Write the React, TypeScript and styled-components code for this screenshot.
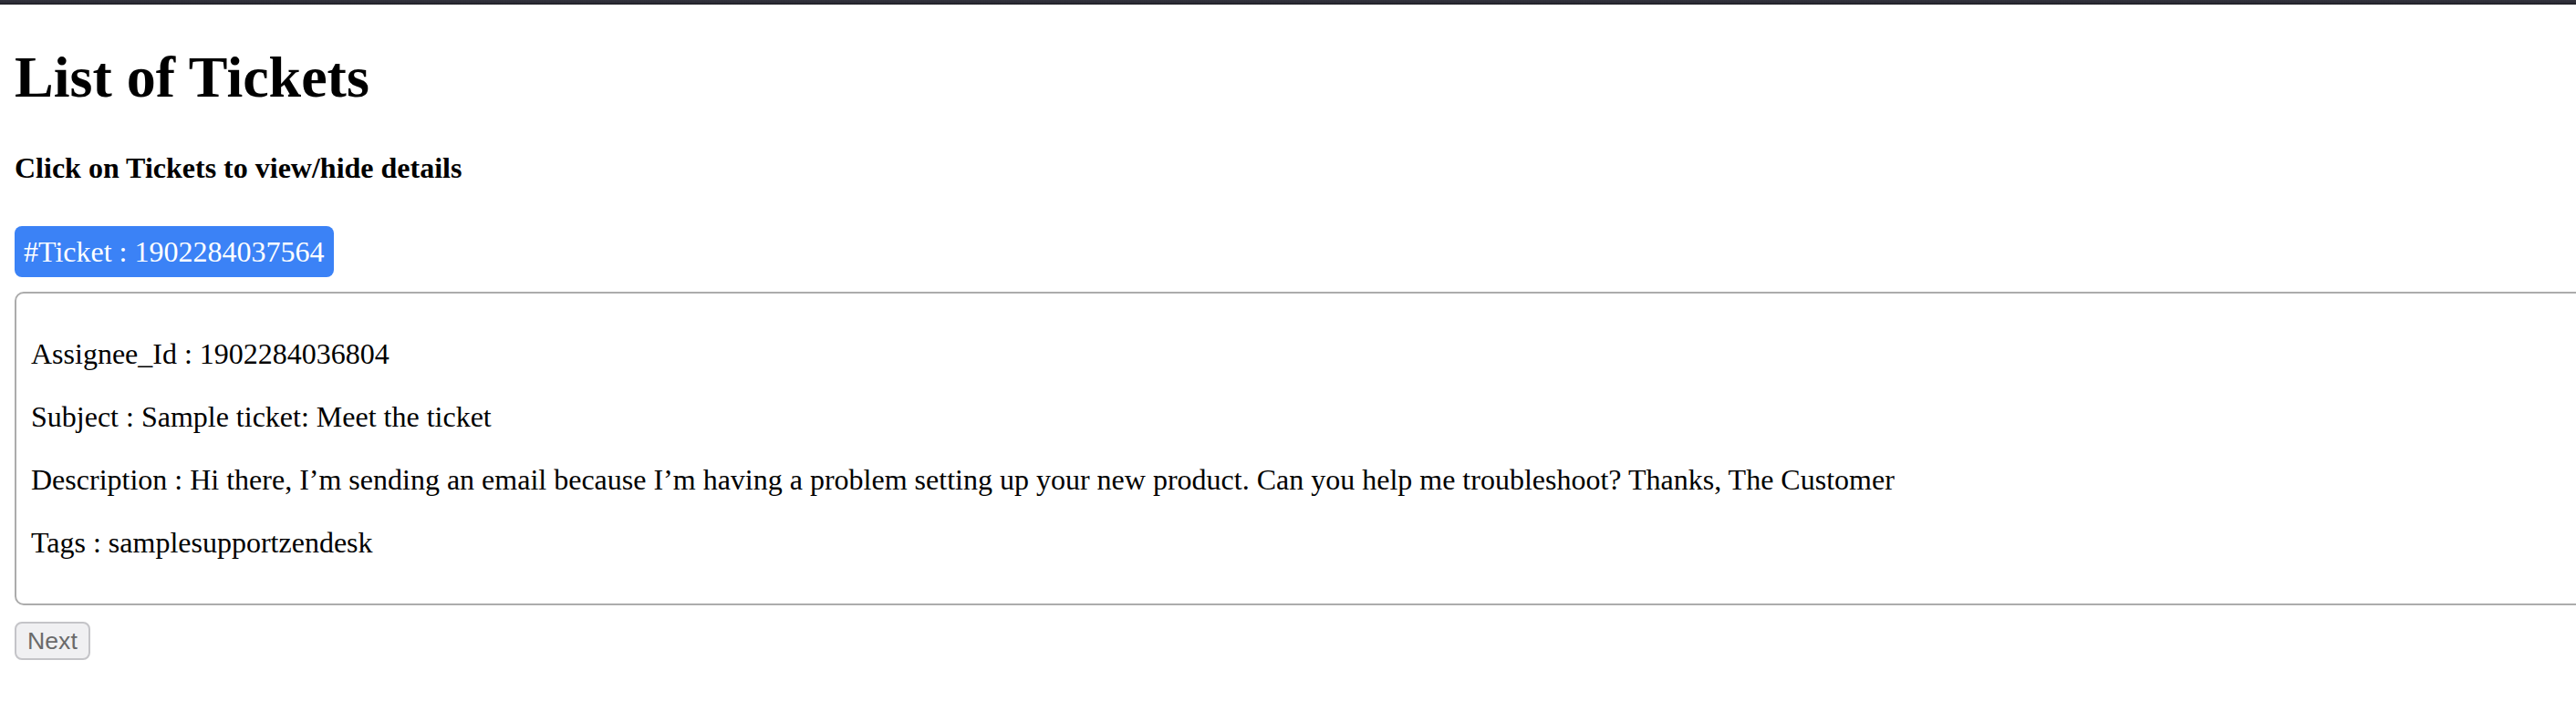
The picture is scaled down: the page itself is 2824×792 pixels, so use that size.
import React from "react";
import styled, { createGlobalStyle } from "styled-components";

const GlobalStyle = createGlobalStyle`
  html, body {
    margin: 0;
    padding: 0;
    background: #ffffff;
    overflow: hidden;
  }
  body {
    font-family: "Liberation Serif", "Times New Roman", serif;
    color: #000000;
  }
`;

const TopBar = styled.div`
  height: 5px;
  background: linear-gradient(#34343e, #2a2a33 70%, #111116);
`;

const Page = styled.main`
  padding: 0 16px;
  width: 2900px;
`;

const Title = styled.h1`
  font-size: 64px;
  font-weight: 700;
  line-height: normal;
  margin: 42.9px 0 44.6px;
`;

const Hint = styled.h4`
  font-size: 32px;
  font-weight: 700;
  line-height: normal;
  margin: 0 0 42.6px;
`;

const TicketToggle = styled.button`
  display: inline-block;
  font-family: "Liberation Serif", "Times New Roman", serif;
  font-size: 32px;
  line-height: 40px;
  color: #ffffff;
  background: #3b82f6;
  border: none;
  border-radius: 8px;
  padding: 8px 10px;
  margin-top: 2px;
  cursor: pointer;
`;

const Details = styled.section`
  margin-top: 16px;
  border: 2px solid #acacac;
  border-radius: 10px;
  padding: 16px;
`;

const Field = styled.p`
  font-size: 32px;
  line-height: normal;
  margin: 32px 0;
`;

const NextButton = styled.button`
  display: block;
  margin-top: 18px;
  height: 42px;
  padding: 0 12px;
  font-family: "Liberation Sans", Arial, sans-serif;
  font-size: 26.67px;
  color: #6a6a6a;
  background: #f0f0f2;
  border: 2px solid #c4c4c8;
  border-radius: 8px;
`;

const ticket = {
  id: "1902284037564",
  assignee: "1902284036804",
  subject: "Sample ticket: Meet the ticket",
  description:
    "Hi there, I\u2019m sending an email because I\u2019m having a problem setting up your new product. Can you help me troubleshoot? Thanks, The Customer",
  tags: "samplesupportzendesk",
};

export default function App() {
  return (
    <>
      <GlobalStyle />
      <TopBar />
      <Page>
        <Title>List of Tickets</Title>
        <Hint>Click on Tickets to view/hide details</Hint>
        <TicketToggle>#Ticket : {ticket.id}</TicketToggle>
        <Details>
          <Field>Assignee_Id : {ticket.assignee}</Field>
          <Field>Subject : {ticket.subject}</Field>
          <Field>Description : {ticket.description}</Field>
          <Field>Tags : {ticket.tags}</Field>
        </Details>
        <NextButton disabled>Next</NextButton>
      </Page>
    </>
  );
}
